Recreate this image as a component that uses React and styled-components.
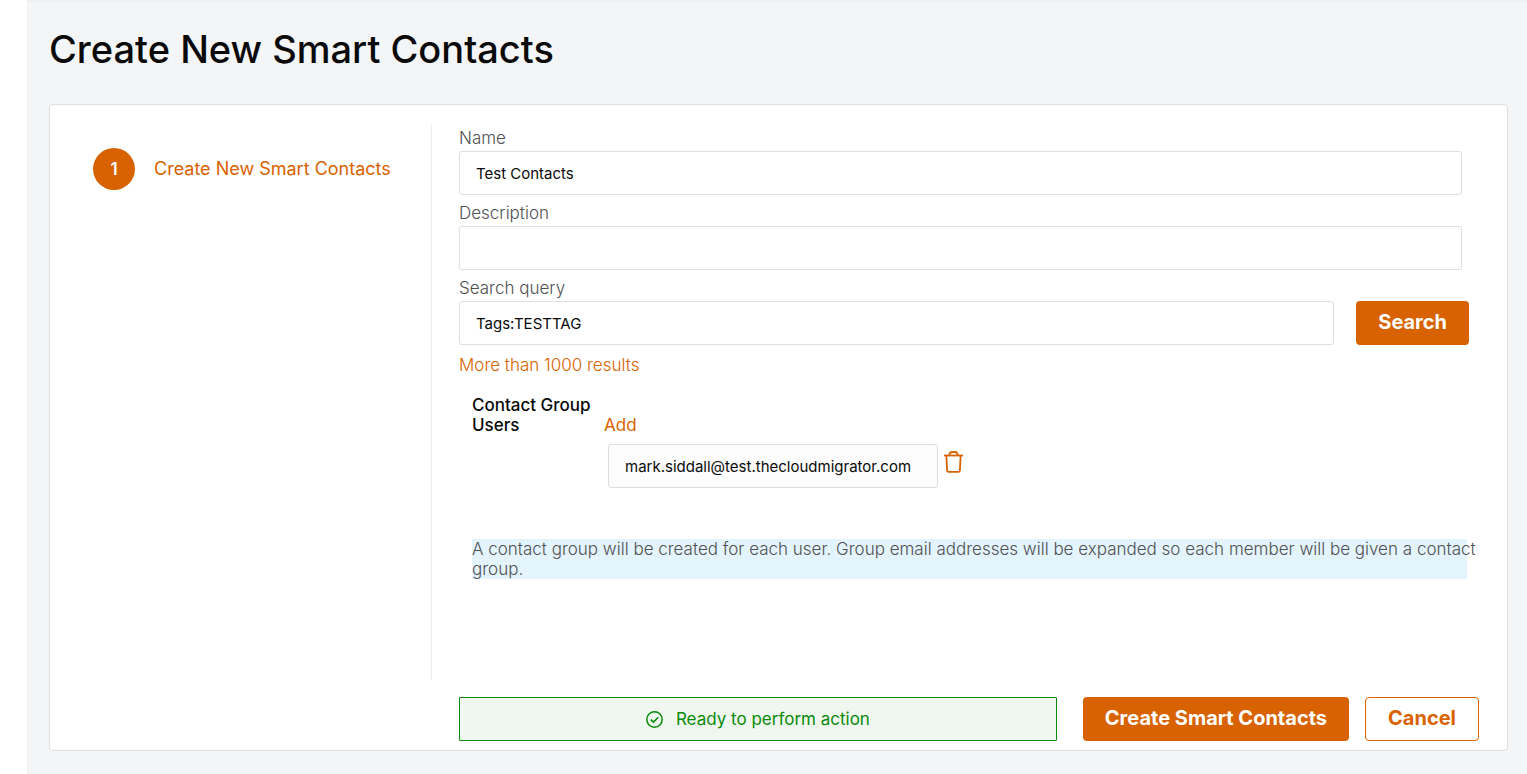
import React, { useState } from 'react'
import styled, { createGlobalStyle, ThemeProvider } from 'styled-components'

const theme = {
  colors: {
    orange: '#d86200',
    green: '#0a8a0a',
    lightGreen: '#f0f7f0',
    lightBlue: '#e4f4fc',
    page: '#f4f5f7',
    border: '#dedede',
    label: '#505153',
    ink: '#0a0a0a',
  },
  fontSizes: {
    S: '15px',
    M: '17px',
    step: '18px',
    L: '20px',
    XL: '38px',
  },
}

const GlobalStyle = createGlobalStyle`
  *,
  *::before,
  *::after {
    box-sizing: border-box;
  }

  body {
    margin: 0;
    background: #fff;
    color: ${props => props.theme.colors.label};
    font-family: Inter, sans-serif;
    font-size: ${props => props.theme.fontSizes.M};
    font-weight: 300;
    line-height: 20px;
  }

  button,
  input {
    font-family: inherit;
  }
`

const Page = styled.main`
  min-height: 100vh;
  margin-left: 27px;
  padding: 24px 19px 23px 22px;
  background: ${props => props.theme.colors.page};
  box-shadow: inset 0 3px 3px -2px rgba(0, 0, 0, 0.04);
`

const PageTitle = styled.h1`
  margin: 0 0 30px;
  color: ${props => props.theme.colors.ink};
  font-size: ${props => props.theme.fontSizes.XL};
  font-weight: 500;
  line-height: 50px;
`

const Card = styled.form`
  padding: 20px 0 9px;
  background: #fff;
  border: 1px solid ${props => props.theme.colors.border};
  border-radius: 4px;
`

const Columns = styled.div`
  display: grid;
  grid-template-columns: 382px 1fr;
  min-height: 555px;
`

const Steps = styled.ol`
  margin: 0;
  padding: 23px 0 0 43px;
  border-right: 1px solid #ececec;
  list-style: none;
`

const Step = styled.li`
  display: flex;
  align-items: center;
  gap: 19px;
  color: ${props => props.theme.colors.orange};
  font-size: ${props => props.theme.fontSizes.step};
  font-weight: 400;
`

const StepNumber = styled.span`
  display: grid;
  place-items: center;
  width: 42px;
  height: 42px;
  border-radius: 50%;
  background: ${props => props.theme.colors.orange};
  color: #fff;
  font-size: ${props => props.theme.fontSizes.M};
  font-weight: 600;
`

const Fields = styled.div`
  padding: 3px 38px 0 27px;
`

const Field = styled.div`
  display: flex;
  flex-direction: column;
  gap: 3px;
  margin: 0 7px 8px 0;
`

const Label = styled.label`
  display: block;
`

const TextInput = styled.input`
  width: 100%;
  min-width: 0;
  height: 44px;
  padding: 0 16px;
  background: ${props => (props.$shaded ? '#fcfcfc' : '#fff')};
  border: 1px solid ${props => props.theme.colors.border};
  border-radius: 3px;
  color: ${props => props.theme.colors.ink};
  font-size: ${props => props.theme.fontSizes.S};
`

const Button = styled.button`
  height: 44px;
  padding: 0 22px 2px;
  background: ${props => (props.$outline ? '#fff' : props.theme.colors.orange)};
  border: ${props => (props.$outline ? `1px solid ${props.theme.colors.orange}` : 0)};
  border-radius: 4px;
  color: ${props => (props.$outline ? props.theme.colors.orange : '#fff')};
  font-size: ${props => props.theme.fontSizes.L};
  font-weight: 700;
  white-space: nowrap;
  cursor: pointer;
`

const SearchRow = styled.div`
  display: flex;
  gap: 22px;
  margin: 3px 0 10px;
`

const Results = styled.p`
  margin: 0;
  color: ${props => props.theme.colors.orange};
`

const Group = styled.fieldset`
  display: grid;
  grid-template-columns: 132px 1fr;
  align-items: end;
  row-gap: 9px;
  margin: 20px 0 0 13px;
  padding: 0;
  border: 0;
`

const GroupLabel = styled.label`
  color: ${props => props.theme.colors.ink};
  font-weight: 500;
`

const AddLink = styled.a`
  justify-self: start;
  color: ${props => props.theme.colors.orange};
  font-weight: 400;
  text-decoration: none;
`

const UserRow = styled.div`
  display: grid;
  grid-column: 2;
  grid-template-columns: 330px auto;
  justify-content: start;
  gap: 6px;
  padding-left: 4px;
`

const IconButton = styled.button`
  align-self: start;
  display: grid;
  padding: 7px 0 0;
  background: none;
  border: 0;
  color: ${props => props.theme.colors.orange};
  cursor: pointer;
`

const Note = styled.div`
  margin: 51px 2px 0 13px;
  background: ${props => props.theme.colors.lightBlue};
`

/* lets the sentence run a little past the tinted strip before it wraps */
const NoteText = styled.p`
  margin: 0 -12px 0 0;
`

const Footer = styled.footer`
  display: flex;
  gap: 26px;
  margin: 17px 28px 0 409px;
`

const Status = styled.div`
  flex: 1;
  display: flex;
  align-items: center;
  justify-content: center;
  gap: 13px;
  height: 44px;
  background: ${props => props.theme.colors.lightGreen};
  border: 1px solid ${props => props.theme.colors.green};
  border-radius: 1px;
  color: ${props => props.theme.colors.green};
  font-weight: 400;
`

const Actions = styled.div`
  display: flex;
  gap: 16px;
`

const TrashIcon = () => (
  <svg width="19" height="22" viewBox="0 0 19 22" fill="none" stroke="currentColor" aria-hidden="true">
    <path d="M0 4.5h19" strokeWidth="1.8" />
    <path d="M5.3 4.2Q5.6 1 8 1h3q2.4 0 2.7 3.2" strokeWidth="1.8" />
    <path d="M2.4 5l.7 14.4q.1 1.4 1.5 1.4h9.8q1.4 0 1.5-1.4L16.6 5" strokeWidth="1.8" />
  </svg>
)

const CheckIcon = () => (
  <svg width="17" height="17" viewBox="0 0 17 17" fill="none" stroke="currentColor" aria-hidden="true">
    <circle cx="8.5" cy="8.5" r="7.7" strokeWidth="1.5" />
    <path d="M4.8 8.6l2.6 2.5 4.9-4.9" strokeWidth="1.6" />
  </svg>
)

const App = () => {
  const [name, setName] = useState('Test Contacts')
  const [description, setDescription] = useState('')
  const [query, setQuery] = useState('Tags:TESTTAG')
  const [user, setUser] = useState('mark.siddall@test.thecloudmigrator.com')

  return (
    <ThemeProvider theme={theme}>
      <GlobalStyle />
      <Page>
        <PageTitle>Create New Smart Contacts</PageTitle>
        <Card onSubmit={event => event.preventDefault()}>
          <Columns>
            <Steps>
              <Step>
                <StepNumber>1</StepNumber>
                <span>Create New Smart Contacts</span>
              </Step>
            </Steps>
            <Fields>
              <Field>
                <Label htmlFor="name">Name</Label>
                <TextInput id="name" value={name} onChange={e => setName(e.target.value)} />
              </Field>
              <Field>
                <Label htmlFor="description">Description</Label>
                <TextInput
                  id="description"
                  value={description}
                  onChange={e => setDescription(e.target.value)}
                />
              </Field>
              <Label htmlFor="query">Search query</Label>
              <SearchRow>
                <TextInput id="query" value={query} onChange={e => setQuery(e.target.value)} />
                <Button type="button">Search</Button>
              </SearchRow>
              <Results>More than 1000 results</Results>
              <Group>
                <GroupLabel htmlFor="user">Contact Group Users</GroupLabel>
                <AddLink href="#add">Add</AddLink>
                <UserRow>
                  <TextInput
                    $shaded
                    id="user"
                    value={user}
                    onChange={e => setUser(e.target.value)}
                  />
                  <IconButton type="button" aria-label="Remove user">
                    <TrashIcon />
                  </IconButton>
                </UserRow>
              </Group>
              <Note>
                <NoteText>
                  A contact group will be created for each user. Group email addresses will be
                  expanded so each member will be given a contact group.
                </NoteText>
              </Note>
            </Fields>
          </Columns>
          <Footer>
            <Status role="status">
              <CheckIcon />
              Ready to perform action
            </Status>
            <Actions>
              <Button type="submit">Create Smart Contacts</Button>
              <Button type="button" $outline>
                Cancel
              </Button>
            </Actions>
          </Footer>
        </Card>
      </Page>
    </ThemeProvider>
  )
}

export default App
